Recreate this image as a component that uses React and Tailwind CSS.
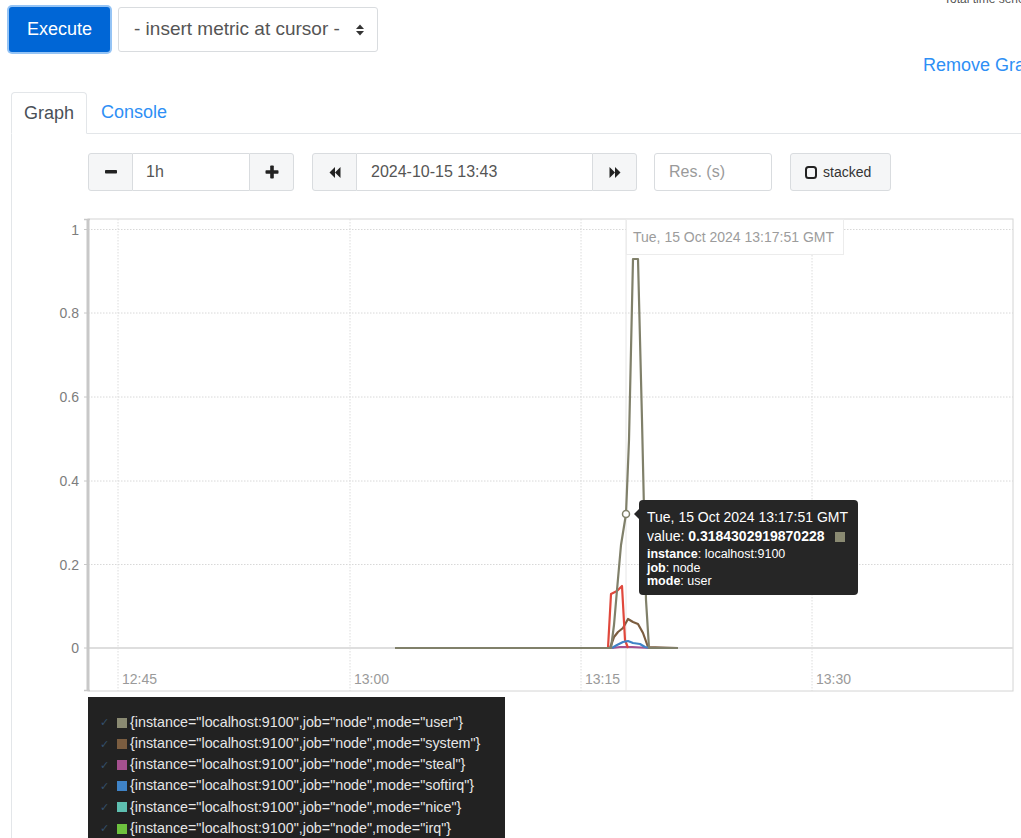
import React from "react";

const gridY = [229.5, 313, 397, 481, 564.5];
const yLabels = [
  { v: "1", y: 229.5 },
  { v: "0.8", y: 313 },
  { v: "0.6", y: 397 },
  { v: "0.4", y: 481 },
  { v: "0.2", y: 564.5 },
  { v: "0", y: 648 },
];
const xTicks = [
  { t: "12:45", x: 118 },
  { t: "13:00", x: 350 },
  { t: "13:15", x: 581 },
  { t: "13:30", x: 812 },
];

const series = [
  {
    color: "#7b5d40",
    pts: [[395, 648], [610, 648], [614, 637], [618, 632], [623, 628], [628, 619], [633, 622], [638, 624], [643, 633], [648, 647], [678, 648]],
  },
  {
    color: "#a5508f",
    pts: [[612, 648], [620, 647], [632, 647], [650, 648]],
  },
  {
    color: "#e0483c",
    pts: [[608, 648], [611, 594], [617, 591], [622, 586], [625, 640], [628, 648]],
  },
  {
    color: "#3f83c7",
    pts: [[612, 648], [617, 645], [623, 642], [628, 641], [633, 643], [640, 644], [645, 647], [650, 648]],
  },
  {
    color: "#80806a",
    pts: [[395, 648], [611, 648], [614, 625], [617, 590], [621, 545], [626, 514], [629, 440], [633, 259], [638, 259], [642, 420], [646, 600], [649, 648], [678, 648]],
  },
];

const legend = [
  { mode: "user", color: "#8a8a72" },
  { mode: "system", color: "#7b5d40" },
  { mode: "steal", color: "#a5508f" },
  { mode: "softirq", color: "#3f83c7" },
  { mode: "nice", color: "#5ebfb0" },
  { mode: "irq", color: "#6ec23e" },
];

const SideButton = ({ children, className = "" }) => (
  <button className={"shrink-0 w-[45px] h-[38px] flex items-center justify-center bg-[#f5f6f7] border border-[#d9dcdf] " + className}>
    {children}
  </button>
);

const Chart = () => (
  <svg width="1009" height="497" viewBox="12 200 1009 497" className="block">
    {/* frame */}
    <rect x="88" y="219" width="925" height="472" fill="none" stroke="#d4d4d4" strokeWidth="1" />
    {gridY.map((y) => (
      <line key={y} x1="88" x2="1013" y1={y} y2={y} stroke="#d8d8d8" strokeWidth="1" strokeDasharray="1.5 1.5" />
    ))}
    {xTicks.map((t) => (
      <line key={t.t} x1={t.x} x2={t.x} y1="219" y2="691" stroke="#dcdcdc" strokeWidth="1" strokeDasharray="1.5 1.5" />
    ))}
    <line x1="626" x2="626" y1="219" y2="691" stroke="#e6e6e6" strokeWidth="1" />
    <line x1="88" x2="1013" y1="648" y2="648" stroke="#dedede" strokeWidth="2" />
    {/* y axis */}
    <line x1="88" x2="88" y1="219" y2="691" stroke="#c8c8c8" strokeWidth="3" />
    <line x1="84" x2="90" y1="219.5" y2="219.5" stroke="#c8c8c8" strokeWidth="1.5" />
    <line x1="84" x2="90" y1="690.5" y2="690.5" stroke="#c8c8c8" strokeWidth="1.5" />
    {yLabels.map((l) => (
      <g key={l.v}>
        <line x1="84" x2="88" y1={l.y} y2={l.y} stroke="#c8c8c8" strokeWidth="1" />
        <text x="79" y={l.y + 5} textAnchor="end" fontSize="14" fill="#7d7d7d" fontFamily="Liberation Sans, Arial, sans-serif">
          {l.v}
        </text>
      </g>
    ))}
    {xTicks.map((t) => (
      <text key={t.t} x={t.x + 4} y="684" fontSize="14" fill="#9a9a9a" fontFamily="Liberation Sans, Arial, sans-serif">
        {t.t}
      </text>
    ))}
    {series.map((s, i) => (
      <polyline
        key={i}
        points={s.pts.map((p) => p.join(",")).join(" ")}
        fill="none"
        stroke={s.color}
        strokeWidth="2.2"
        strokeLinejoin="round"
      />
    ))}
    <circle cx="626" cy="514" r="3.5" fill="#fff" stroke="#80806a" strokeWidth="1.5" />
  </svg>
);

export default function App() {
  return (
    <div className="relative w-[1021px] h-[838px] overflow-hidden bg-white font-['Liberation_Sans',Arial,sans-serif] text-[#212529]">
      {/* query toolbar */}
      <div className="pl-[9px] pt-[7px]">
        <div className="flex items-start">
          <button className="shrink-0 w-[101px] h-[45px] rounded-[3px] bg-[#0066d6] text-white text-[18px] ring-2 ring-[#95c4f5]">
            Execute
          </button>
          <div className="shrink-0 ml-[8px] w-[260px] h-[45px] rounded-[3px] border border-[#d9dcdf] flex items-center pl-[15px] text-[19px] text-[#555]">
            <span>- insert metric at cursor -</span>
            <svg width="8" height="12" viewBox="0 0 8 12" className="ml-[16px]">
              <polygon points="0,5 8,5 4,0.5" fill="#333" />
              <polygon points="0,7 8,7 4,11.5" fill="#333" />
            </svg>
          </div>
          <div className="shrink-0 ml-[566px] -mt-[17px] whitespace-nowrap text-[12px] text-[#555]">Total time series: 6</div>
        </div>
        <div className="ml-[914px] mt-[1px] whitespace-nowrap text-[18px] leading-[24px] text-[#2e8ff5]">Remove Graph</div>
      </div>

      {/* tabs */}
      <div className="mt-[15px] pl-[11px]">
        <div className="flex border-b border-[#e3e6e9] h-[42px]">
          <div className="h-[42px] -mb-px px-[12px] flex items-center border border-[#e3e6e9] border-b-white rounded-t-[4px] bg-white text-[18px] text-[#495057]">
            Graph
          </div>
          <div className="h-[41px] px-[14px] flex items-center text-[18px] text-[#2e8ff5]">Console</div>
        </div>

        <div className="border-l border-[#e3e6e9] h-[720px]">
          {/* range controls */}
          <div className="pl-[76px] pt-[19px] flex text-[16px]">
            <div className="flex">
              <SideButton className="rounded-l-[3px]">
                <svg width="12" height="4" viewBox="0 0 12 4">
                  <rect x="0" y="0" width="12" height="3.5" rx="0.8" fill="#222" />
                </svg>
              </SideButton>
              <div className="w-[116px] h-[38px] border-y border-[#d9dcdf] flex items-center pl-[13px] text-[#555]">1h</div>
              <SideButton className="rounded-r-[3px]">
                <svg width="14" height="14" viewBox="0 0 14 14">
                  <rect x="5.2" y="0.5" width="3.6" height="13" rx="0.8" fill="#222" />
                  <rect x="0.5" y="5.2" width="13" height="3.6" rx="0.8" fill="#222" />
                </svg>
              </SideButton>
            </div>
            <div className="flex ml-[18px]">
              <SideButton className="rounded-l-[3px]">
                <svg width="12" height="11" viewBox="0 0 12 11">
                  <polygon points="6,0 6,11 0.5,5.5" fill="#222" />
                  <polygon points="11.5,0 11.5,11 6,5.5" fill="#222" />
                </svg>
              </SideButton>
              <div className="w-[235px] h-[38px] border-y border-[#d9dcdf] flex items-center pl-[14px] text-[#555]">2024-10-15 13:43</div>
              <SideButton className="rounded-r-[3px]">
                <svg width="12" height="11" viewBox="0 0 12 11">
                  <polygon points="0.5,0 0.5,11 6,5.5" fill="#222" />
                  <polygon points="6,0 6,11 11.5,5.5" fill="#222" />
                </svg>
              </SideButton>
            </div>
            <div className="ml-[17px] w-[118px] h-[38px] rounded-[3px] border border-[#d9dcdf] flex items-center pl-[14px] text-[#9a9a9a]">
              Res. (s)
            </div>
            <button className="ml-[18px] w-[101px] h-[38px] rounded-[3px] border border-[#d9dcdf] bg-[#f5f6f7] flex items-center pl-[14px] text-[14px] text-[#333]">
              <svg width="12" height="13" viewBox="0 0 12 13" className="mr-[6px]">
                <rect x="1" y="1" width="10" height="11" rx="2.5" fill="none" stroke="#222" strokeWidth="2" />
              </svg>
              stacked
            </button>
          </div>

          {/* graph */}
          <div className="relative mt-[9px] w-[1009px] h-[497px]">
            <Chart />
            <div className="absolute left-[614px] top-[19px] w-[218px] h-[36px] bg-white border border-[#ececec] pl-[6px] pt-[9px] text-[14px] leading-[16px] text-[#9c9c9c] whitespace-nowrap">
              Tue, 15 Oct 2024 13:17:51 GMT
            </div>
            <div className="absolute left-[627px] top-[300px] w-[219px] h-[95px] rounded-[4px] bg-[#262626] pl-[8px] pt-[9px] text-white whitespace-nowrap">
              <div className="absolute -left-[5px] top-[9px] w-0 h-0 border-y-[5px] border-y-transparent border-r-[5px] border-r-[#262626]" />
              <div className="text-[14px] leading-[17px]">Tue, 15 Oct 2024 13:17:51 GMT</div>
              <div className="flex items-center text-[14px] leading-[21px]">
                <span>value:&nbsp;</span>
                <span className="font-bold">0.3184302919870228</span>
                <span className="ml-[10px] w-[10px] h-[10px] bg-[#8a8a72]" />
              </div>
              <div className="text-[12.5px] leading-[13.5px] mt-[1px]">
                <div><b>instance</b>: localhost:9100</div>
                <div><b>job</b>: node</div>
                <div><b>mode</b>: user</div>
              </div>
            </div>
          </div>

          {/* legend */}
          <div className="ml-[76px] w-[417px] h-[160px] bg-[#222] pt-[15px] pl-[12px]">
            {legend.map((l) => (
              <div key={l.mode} className="flex items-center h-[21.2px] text-[14.3px] text-[#e6e6e6] whitespace-nowrap">
                <span className="w-[17px] text-[11px] text-[#34506c]">✓</span>
                <span className="w-[10px] h-[10px] mr-[3px]" style={{ backgroundColor: l.color }} />
                <span>{`{instance="localhost:9100",job="node",mode="${l.mode}"}`}</span>
              </div>
            ))}
          </div>
        </div>
      </div>
    </div>
  );
}
